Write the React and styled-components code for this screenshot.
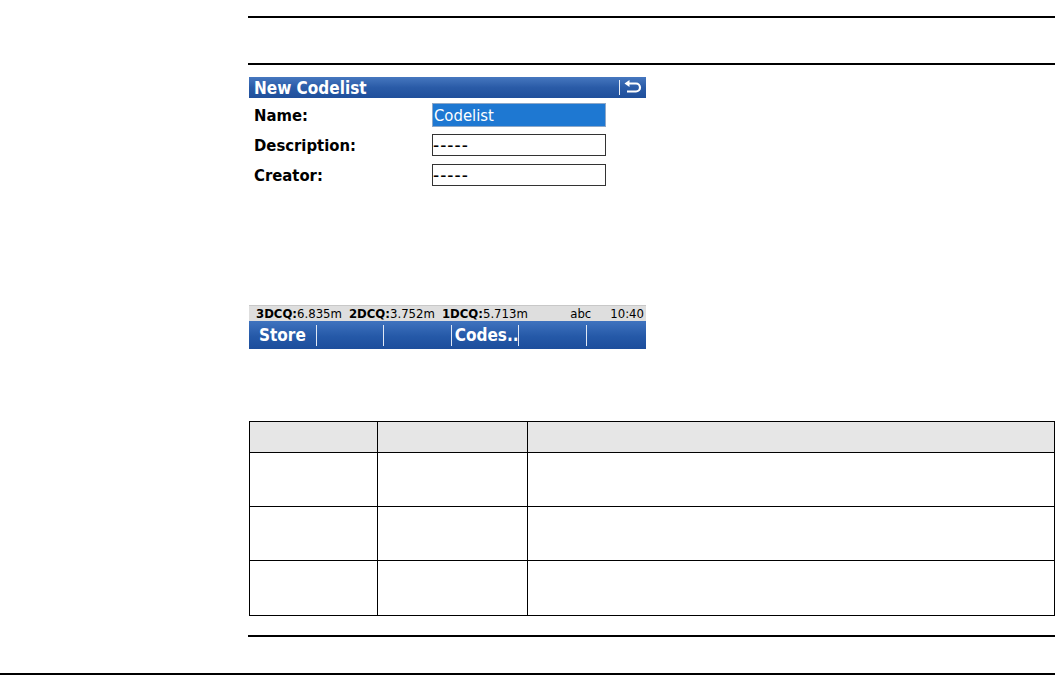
import React from "react";
import styled, { createGlobalStyle } from "styled-components";

const Global = createGlobalStyle`
  html, body { margin: 0; padding: 0; background: #fff; }
  body { font-family: "DejaVu Sans Condensed", "DejaVu Sans", sans-serif; }
`;

const Page = styled.div`
  width: 1055px;
  height: 676px;
  position: relative;
  display: flex;
  flex-direction: column;
  box-sizing: border-box;
  padding-top: 16px;
`;

const Content = styled.div`
  margin-left: 248px;
  display: flex;
  flex-direction: column;
`;

const Rule = styled.div`
  height: 1px;
  background: #000;
  border-top: 0.5px solid #000;
  margin-top: ${(p) => p.$mt || 0}px;
`;

const Screen = styled.div`
  margin-top: 12px;
  margin-left: 1px;
  width: 397px;
  display: flex;
  flex-direction: column;
`;

const TitleBar = styled.div`
  height: 21px;
  background: linear-gradient(#4677bf, #2a5ba7 50%, #1f4f9b);
  display: flex;
  align-items: center;
  padding-left: 5px;
  color: #fff;
  font-weight: bold;
  font-size: 17px;
`;

const Title = styled.div`
  flex: 1;
`;

const Sep = styled.div`
  width: 1.5px;
  height: 15px;
  background: #e8eef8;
`;

const IconBox = styled.div`
  width: 26px;
  display: flex;
  justify-content: center;
  align-items: center;
`;

const Form = styled.div`
  display: flex;
  flex-direction: column;
  gap: 6px;
  padding-top: 5px;
`;

const Row = styled.div`
  display: flex;
  align-items: center;
  height: 24px;
`;

const Label = styled.div`
  width: 178px;
  padding-left: 5px;
  font-weight: bold;
  font-size: 16.5px;
  color: #000;
`;

const Field = styled.div`
  width: 174px;
  height: ${(p) => (p.$sel ? 24 : 22)}px;
  box-sizing: border-box;
  border: 1px solid ${(p) => (p.$sel ? "#8ea8c8" : "#333")};
  background: ${(p) => (p.$sel ? "#1e78d2" : "#fff")};
  color: ${(p) => (p.$sel ? "#fff" : "#000")};
  font-size: ${(p) => (p.$sel ? 16.5 : 19)}px;
  display: flex;
  align-items: center;
  padding-left: ${(p) => (p.$sel ? 1 : 0)}px;
  letter-spacing: ${(p) => (p.$sel ? 0 : 1)}px;
`;

const StatusBar = styled.div`
  margin-top: 118px;
  height: 16px;
  background: #dedede;
  border-top: 1px solid #c8c8c8;
  box-sizing: border-box;
  display: flex;
  align-items: center;
  font-size: 13px;
  color: #000;
  padding: 0 2px 0 7px;
`;

const Quality = styled.span`
  margin-right: 7px;
  b { font-weight: bold; }
`;

const Spacer = styled.div`
  flex: 1;
`;

const StatusItem = styled.span`
  margin-left: ${(p) => p.$ml || 0}px;
`;

const SoftKeys = styled.div`
  height: 28px;
  background: linear-gradient(#3f73bf, #2559a8 55%, #1d4e9c);
  display: grid;
  grid-template-columns: repeat(5, 67.6px) 1fr;
  align-items: center;
`;

const SoftKey = styled.div`
  height: 21px;
  display: flex;
  align-items: center;
  padding-left: ${(p) => (p.$first ? 10 : 3)}px;
  color: #fff;
  font-weight: bold;
  font-size: 17px;
  border-right: ${(p) => (p.$last ? "none" : "1.5px solid #e0e8f5")};
  box-sizing: border-box;
`;

const Table = styled.div`
  margin-top: 72px;
  margin-left: 1px;
  width: 806px;
  display: grid;
  grid-template-columns: 128px 150px 1fr;
  grid-template-rows: 31px 54px 54px 54px;
  border: 1.5px solid #000;
  box-sizing: border-box;
`;

const Cell = styled.div`
  background: ${(p) => (p.$head ? "#e6e6e6" : "#fff")};
  border-right: ${(p) => (p.$lastCol ? "none" : "1.5px solid #000")};
  border-bottom: ${(p) => (p.$lastRow ? "none" : "1.5px solid #000")};
`;

const PageRule = styled.div`
  position: absolute;
  left: 0;
  right: 0;
  top: 673px;
  height: 1.5px;
  background: #000;
`;

const BackIcon = () => (
  <svg width="18" height="15" viewBox="0 0 18 15">
    <path
      d="M4 3.5 H12 A4 4 0 0 1 12 11.5 H3"
      fill="none"
      stroke="#fff"
      strokeWidth="2.2"
    />
    <path d="M0.5 3.5 L5.5 0 L5.5 7 Z" fill="#fff" />
  </svg>
);

export default function App() {
  const rows = [0, 1, 2, 3];
  return (
    <>
      <Global />
      <Page>
        <Content>
          <Rule />
          <Rule $mt={45} />
          <Screen>
            <TitleBar>
              <Title>New Codelist</Title>
              <Sep />
              <IconBox>
                <BackIcon />
              </IconBox>
            </TitleBar>
            <Form>
              <Row>
                <Label>Name:</Label>
                <Field $sel>Codelist</Field>
              </Row>
              <Row>
                <Label>Description:</Label>
                <Field>-----</Field>
              </Row>
              <Row>
                <Label>Creator:</Label>
                <Field>-----</Field>
              </Row>
            </Form>
            <StatusBar>
              <Quality>
                <b>3DCQ:</b>6.835m
              </Quality>
              <Quality>
                <b>2DCQ:</b>3.752m
              </Quality>
              <Quality>
                <b>1DCQ:</b>5.713m
              </Quality>
              <Spacer />
              <StatusItem>abc</StatusItem>
              <StatusItem $ml={19}>10:40</StatusItem>
            </StatusBar>
            <SoftKeys>
              <SoftKey $first>Store</SoftKey>
              <SoftKey />
              <SoftKey />
              <SoftKey>Codes..</SoftKey>
              <SoftKey />
              <SoftKey $last />
            </SoftKeys>
          </Screen>
          <Table>
            {rows.map((r) =>
              [0, 1, 2].map((c) => (
                <Cell
                  key={`${r}-${c}`}
                  $head={r === 0}
                  $lastCol={c === 2}
                  $lastRow={r === 3}
                />
              ))
            )}
          </Table>
          <Rule $mt={19} />
        </Content>
        <PageRule />
      </Page>
    </>
  );
}
